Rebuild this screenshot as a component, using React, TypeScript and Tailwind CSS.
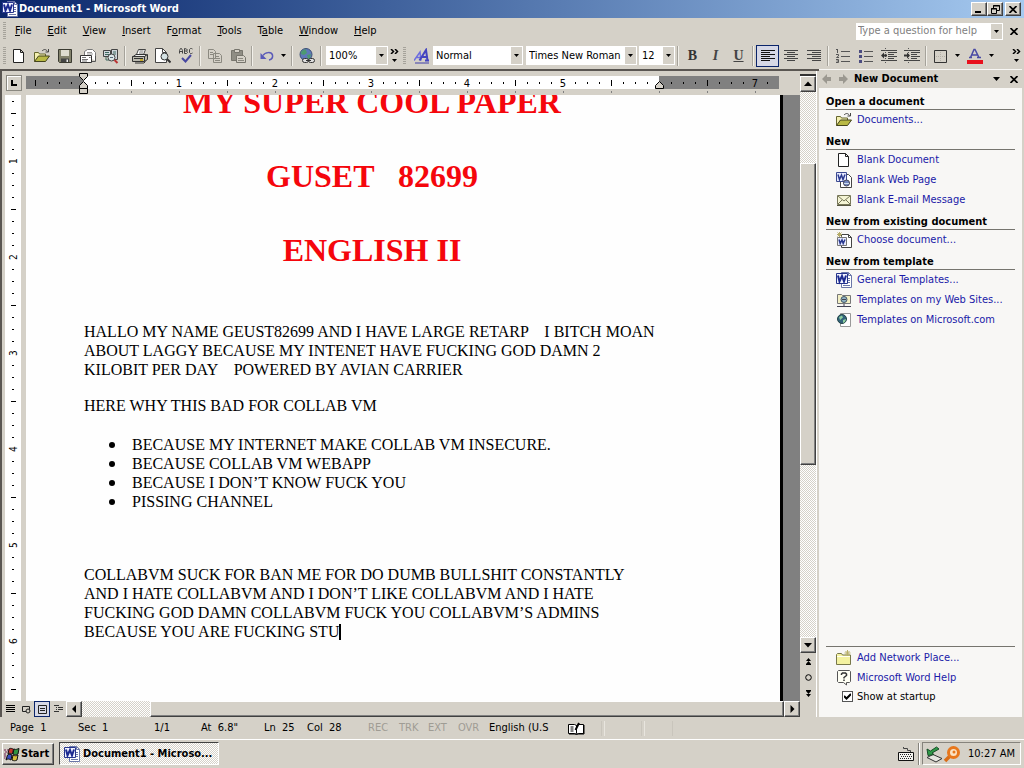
import React from "react";

const raised =
  "border border-t-white border-l-white border-r-[#404040] border-b-[#404040] shadow-[inset_-1px_-1px_0_#808080] bg-[#d5d1c8]";
const dither =
  "bg-[repeating-conic-gradient(#ffffff_0_25%,#d5d1c8_0_50%)] bg-[length:2px_2px]";

function Svg({ children, size = 16 }: { children: React.ReactNode; size?: number }) {
  return (
    <svg width={size} height={size} viewBox="0 0 16 16" fill="none" aria-hidden="true" className="shrink-0">
      {children}
    </svg>
  );
}

const PageShape = () => (
  <path d="M2.500 1.500h7l3 3v10h-10zM9.500 1.500v3h3" fill="#fff" stroke="#222" />
);

const WordIcon = () => (
  <Svg>
    <path d="M5.500 .5h7l3 3v12h-10z" fill="#fff" stroke="#6a76a8" />
    <path d="M12.500 .5v3h3M12 6.500h2M12 8.500h2M12 10.500h2M7 13.500h7" stroke="#6a76a8" />
    <path d="M.5 1.500h11v10H.5z" fill="#f2f4ff" stroke="#26358c" />
    <path d="M2 3.500l1.500 6L6 4l2 5.500L10 3.500" stroke="#1c2a90" strokeWidth="2" />
  </Svg>
);
const NewIcon = () => (
  <Svg>
    <PageShape />
  </Svg>
);
const OpenIcon = () => (
  <Svg>
    <path d="M.5 13.500v-9h4l1 1.500h6v2" fill="#f4f0b0" stroke="#66662f" />
    <path d="M.5 13.500l4-5.500h11l-4 5.500z" fill="#b9b944" stroke="#44441c" />
    <path d="M8 3c2-2 4-2 5.500.5M14.500 1v3h-3" stroke="#444" />
  </Svg>
);
const SaveIcon = () => (
  <Svg>
    <path d="M1.500 1.500h13v13h-12l-1-1z" fill="#83826c" stroke="#3a3a30" />
    <path d="M4 2h8v6H4z" fill="#dedccf" />
    <path d="M4 10.500h8V14H4z" fill="#444" />
    <path d="M9.500 11.500h1.500V14H9.500z" fill="#eee" />
  </Svg>
);
const MailIcon = () => (
  <Svg>
    <path d="M4.500 8V3.500l3-2h5l3 3v8" fill="#fff" stroke="#777" />
    <path d="M7 4.500h5M7 6h6" stroke="#999" />
    <path d="M.5 7.500h11v7H.5z" fill="#fff" stroke="#333" />
    <path d="M2 9.500h4M2 11.500h6M9 9.500h1.500M2 13h5" stroke="#777" />
    <path d="M12 13.500h3.500V8" stroke="#555" />
  </Svg>
);
const SearchIcon = () => (
  <Svg>
    <path d="M.5 2.500h7v6h-7zM8.500 1.500h6v10h-6z" fill="#cfd6dc" stroke="#444" />
    <path d="M2 4.500h4M2 6.500h4M10 4h3M10 6h3M3 9v3h3" stroke="#3f6a60" />
    <circle cx="8.500" cy="9.500" r="3.500" fill="#dce8ea" stroke="#444" />
    <path d="M11.500 12l3 3" stroke="#b33" strokeWidth="2" />
    <path d="M7 9.500h3" stroke="#567" />
  </Svg>
);
const PrintIcon = () => (
  <Svg>
    <path d="M4.500 6.500l2-5h7l-2 5" fill="#fff" stroke="#444" />
    <path d="M7.500 3h4M7 5h4" stroke="#777" />
    <path d="M.5 9l3.500-2.500h10.500L12.500 9z" fill="#eee" stroke="#333" />
    <path d="M.5 8.500h12v5H.5zM12.500 8.500l3-2v5l-3 2" fill="#bbb9ae" stroke="#333" />
    <path d="M2 10.500h9M3 15h9l1.500-1.500" stroke="#333" />
    <path d="M8 12h3" stroke="#c9a400" strokeWidth="1.500" />
  </Svg>
);
const PreviewIcon = () => (
  <Svg>
    <path d="M.5 .5h7l4 4v10H.5z" fill="#fff" stroke="#444" />
    <path d="M7.500 .5v4h4" stroke="#444" />
    <circle cx="9.500" cy="8.500" r="3.500" fill="#d5e2e4" stroke="#333" />
    <path d="M12 11l3.500 3.500" stroke="#333" strokeWidth="2" />
  </Svg>
);
const SpellIcon = () => (
  <Svg>
    <path d="M1.500 5.500V2.500l1-2h1l1 2v3M1.500 3.500h3M6.500 .5V5.500h2l1-1-1-1.500 1-1-1-1zM6.500 3h2M14.500 1l-1-.5h-1l-1 1v3l1 1h1l1-.5" stroke="#444" />
    <path d="M4 10l3.500 3.500L13 7" stroke="#4747a0" strokeWidth="2" />
  </Svg>
);
const CopyIcon = () => (
  <Svg>
    <path d="M1.500 1.500h5l2 2v7h-7zM6.500 5.500h6l2 2v7h-8z" fill="#d5d1c8" stroke="#8b8980" />
    <path d="M3 4.500h3M3 6.500h3M8 8.500h4M8 10.500h5M8 12.500h5" stroke="#8b8980" />
  </Svg>
);
const PasteIcon = () => (
  <Svg>
    <path d="M1.500 2.500h11v10h-11z" fill="#8f8d84" stroke="#77756d" />
    <path d="M4.500 1.500h5v3h-5z" fill="#d5d1c8" stroke="#77756d" />
    <path d="M6.500 7.500h7l2 2v5h-9z" fill="#d5d1c8" stroke="#77756d" />
    <path d="M8 10.500h5M8 12.500h6" stroke="#8b8980" />
  </Svg>
);
const UndoIcon = () => (
  <Svg>
    <path d="M4 7.500c2-3.500 8.500-4 9.500-.5.5 2.500-1 4.500-3.500 5" stroke="#5a5ab8" strokeWidth="1.500" />
    <path d="M1.500 5v6h6z" fill="#5a5ab8" />
  </Svg>
);
const HyperlinkIcon = () => (
  <Svg>
    <circle cx="7" cy="6.500" r="6" fill="#5f78b8" stroke="#3c5075" />
    <path d="M2.500 3l4-2 1.500 4-3 2-3-1zM8 7l4-1-1 4-2 1z" fill="#4c9a70" />
    <rect x="3.500" y="10.500" width="6" height="4" rx="2" fill="#ddd" stroke="#333" />
    <rect x="9.500" y="10.500" width="6" height="4" rx="2" fill="#ddd" stroke="#333" />
    <path d="M7 12.500h5" stroke="#333" />
  </Svg>
);
const StylesIcon = () => (
  <Svg>
    <path d="M0 12.500L6 4l1 8.500M2.500 9.500h4" stroke="#6d6de0" strokeWidth="1.500" />
    <path d="M5.500 12.500L12 2l1.500 10.500M8 9h5.500M11 12.500h4" stroke="#4444c0" strokeWidth="2" />
    <path d="M1 15h14" stroke="#3f3fa8" />
  </Svg>
);
const linesPath = {
  left: "M1 2.500h14M1 4.500h9M1 6.500h14M1 8.500h9M1 10.500h14M1 12.500h9",
  center: "M1 2.500h14M4 4.500h8M1 6.500h14M4 8.500h8M1 10.500h14M4 12.500h8",
  right: "M1 2.500h14M6 4.500h9M1 6.500h14M6 8.500h9M1 10.500h14M6 12.500h9",
};
const AlignIcon = ({ kind }: { kind: "left" | "center" | "right" }) => (
  <Svg>
    <path d={linesPath[kind]} stroke={kind === "left" ? "#111" : "#444"} />
  </Svg>
);
const NumberingIcon = () => (
  <Svg>
    <path d="M2.500 1v4M1 1.500h2M1 6.500h2.500v1.500L1.500 9.500H4M1 11.500h2.500v3H1M1.500 13h2" stroke="#555" />
    <path d="M6 3.500h9M6 8.500h9M6 13.500h9" stroke="#555" />
  </Svg>
);
const BulletsIcon = () => (
  <Svg>
    <path d="M1 2h3v3H1zM1 7h3v3H1zM1 12h3v3H1z" fill="#4c4c80" />
    <path d="M6 3.500h9M6 8.500h9M6 13.500h9" stroke="#555" />
  </Svg>
);
const IndentIcon = ({ flip = false }: { flip?: boolean }) => (
  <Svg>
    <path d="M0 2.500h16M7 4.500h9M7 6.500h6M7 8.500h9M7 10.500h6M0 12.500h16" stroke="#444" />
    <path d="M4.500 0v15" stroke="#555" strokeDasharray="1 1" />
    {flip ? <path d="M0 7.500l3-3v2h3v2H3v2z" fill="#333" /> : <path d="M6 7.500l-3-3v2H0v2h3v2z" fill="#333" />}
  </Svg>
);
const BorderIcon = () => (
  <Svg>
    <path d="M1.500 2.500h12v12h-12z" stroke="#333" />
    <path d="M7.500 4v10M3 8.500h10" stroke="#b5b1a8" strokeDasharray="1 1" />
  </Svg>
);
const FontColorIcon = () => (
  <Svg>
    <path d="M3.500 9.500L7 1.500h1l4 8M5 7h5.500M2 9.500h3M10 9.500h4" stroke="#4a4aa4" strokeWidth="1.500" />
    <path d="M0 12h16v4H0z" fill="#e8101c" />
  </Svg>
);
const WebPageIcon = () => (
  <Svg>
    <path d="M4.500 2.500h8l3 3v10h-11z" fill="#fff" stroke="#444" />
    <path d="M.5 .5h10v9H.5z" fill="#e8ebff" stroke="#3c4a90" />
    <path d="M2 2.500l1.500 5L5.500 3l1.500 4.500L9 2.500" stroke="#2b3a90" strokeWidth="1.500" />
    <circle cx="10.500" cy="11" r="3" fill="#7285c0" stroke="#445" />
    <path d="M8 11.500h5" stroke="#cde" />
  </Svg>
);
const EnvelopeIcon = () => (
  <Svg>
    <path d="M1.500 3.500h13v9h-13z" fill="#f4f4d4" stroke="#777758" />
    <path d="M2 4l6 5 6-5M2 12l4-4M14 12l-4-4" stroke="#777758" />
    <path d="M1 13.500h14" stroke="#555540" />
  </Svg>
);
const ExistingIcon = () => (
  <Svg>
    <path d="M5.500 2.500h7l3 3v10h-10z" fill="#fff" stroke="#444" />
    <path d="M12.500 2.500v3h3" stroke="#444" />
    <path d="M1.500 5.500h9v8h-9z" fill="#e8ebff" stroke="#777" />
    <path d="M3 7.500l1.200 4L6 8l1.200 3.500L9 7.500" stroke="#2b3a90" strokeWidth="1.500" />
    <path d="M3.500 0v5M1 2.500h5M1.500 .5l4 4M5.500 .5l-4 4" stroke="#b5ab68" />
  </Svg>
);
const SitesIcon = () => (
  <Svg>
    <path d="M1.500 11.500v-9h4l1 1h8v8z" fill="#f2efc4" stroke="#777" />
    <circle cx="8" cy="7.500" r="3" fill="#8fb2c4" stroke="#456" />
    <path d="M6 7.500h4M8 12v2M1 14.500h14" stroke="#445" />
  </Svg>
);
const GlobePageIcon = () => (
  <Svg>
    <path d="M4.500 1.500h10v13h-10z" fill="#fff" stroke="#999" />
    <circle cx="6" cy="7" r="4.500" fill="#33637c" stroke="#244" />
    <path d="M3 5l3-1.500 1 2L4 8zM7 8l3-1-1 3-2 1z" fill="#8fd0a0" />
  </Svg>
);
const NetPlaceIcon = () => (
  <Svg>
    <path d="M.5 14.500v-10l1-1h4l1 1.500h8v9.500z" fill="#f4f2a0" stroke="#77774a" />
    <path d="M1 6.500h13" stroke="#fffff0" />
    <path d="M11.500 0v6M8.500 3h6M9.500 1l4 4M13.500 1l-4 4" stroke="#b8b068" />
  </Svg>
);
const HelpIcon = () => (
  <Svg>
    <path d="M2.500 .5h11l1 1v10l-1 1h-3v2.500l-3-2.500h-5l-1-1v-10z" fill="#fffff4" stroke="#555" />
    <path d="M5.500 5V4l1-1h3l1 1v1.500L8 7.500V8.500M8 9.500v1.500" stroke="#333" strokeWidth="1.500" />
  </Svg>
);

function Down() {
  return (
    <svg width="5" height="3" viewBox="0 0 5 3" aria-hidden="true" className="shrink-0">
      <path d="M0 0h5L2.500 3z" fill="#000" />
    </svg>
  );
}

function Arrow({ dir }: { dir: "up" | "down" | "left" | "right" }) {
  const d = {
    up: "M4 1.500L8 6H0z",
    down: "M0 2h8L4 6.500z",
    left: "M2 4l4-4v8z",
    right: "M6.500 4l-4-4v8z",
  }[dir];
  return (
    <svg width="8" height="8" viewBox="0 0 8 8" aria-hidden="true">
      <path d={d} fill="#000" />
    </svg>
  );
}

const Tool = ({ label, children }: { label: string; children: React.ReactNode }) => (
  <button aria-label={label} title={label} className="flex h-[22px] w-[23px] shrink-0 items-center justify-center">
    {children}
  </button>
);
const Drop = ({ label }: { label: string }) => (
  <button aria-label={label} className="flex h-[22px] w-[11px] shrink-0 items-center justify-center">
    <Down />
  </button>
);
const Sep = () => <div className="mx-[2px] h-5 w-[2px] shrink-0 border-l border-[#a5a29a] border-r border-r-[#f2f0ea]" />;
const Grip = () => (
  <div className="h-[18px] w-[3px] shrink-0 bg-[repeating-linear-gradient(#a5a29a_0_1px,#d5d1c8_1px_2px)]" />
);

function Combo({ label, value, className }: { label: string; value: string; className: string }) {
  return (
    <div className={"flex h-[19px] shrink-0 items-center bg-white " + className}>
      <select aria-label={label} className="h-full min-w-0 flex-1 appearance-none bg-transparent pl-[3px] outline-none">
        <option>{value}</option>
      </select>
      <span className="pointer-events-none mr-px flex h-[17px] w-[11px] items-center justify-center bg-[#d5d1c8]">
        <Down />
      </span>
    </div>
  );
}

function Chevrons() {
  return (
    <button aria-label="Toolbar options" className="flex h-[22px] w-[11px] shrink-0 flex-col items-center justify-center gap-[5px]">
      <svg width="9" height="5" viewBox="0 0 9 5" aria-hidden="true">
        <path d="M1 0l2.500 2.500L1 5M5 0l2.500 2.500L5 5" fill="none" stroke="#000" strokeWidth="1.500" />
      </svg>
      <Down />
    </button>
  );
}

function CloseGlyph() {
  return (
    <svg width="8" height="7" viewBox="0 0 8 7" aria-hidden="true">
      <path d="M.5 0l7 7M7.500 0l-7 7" stroke="#000" strokeWidth="1.700" />
    </svg>
  );
}

const menus = ["File", "Edit", "View", "Insert", "Format", "Tools", "Table", "Window", "Help"];
const menuAccess: Record<string, number> = { Format: 1, Table: 1 };

function TitleBar() {
  return (
    <header className="flex h-[18px] shrink-0 items-center bg-linear-to-r from-[#0a246a] to-[#a6caf0] pr-[3px] pl-[2px] text-white">
      <WordIcon />
      <h1 className="ml-px flex-1 text-[11px] font-bold">Document1 - Microsoft Word</h1>
      <button aria-label="Minimize" className={"flex h-[14px] w-4 items-end justify-center pb-[2px] " + raised}>
        <span className="mr-[2px] h-[2px] w-[6px] bg-black" />
      </button>
      <button aria-label="Restore" className={"flex h-[14px] w-4 items-center justify-center " + raised}>
        <svg width="9" height="9" viewBox="0 0 9 9" fill="none" stroke="#000" aria-hidden="true">
          <path d="M2.500 3V.5h6v5H6M2 1h7M.5 3.500h5v5h-5zM0 4h6" />
        </svg>
      </button>
      <button aria-label="Close" className={"ml-[2px] flex h-[14px] w-4 items-center justify-center " + raised}>
        <CloseGlyph />
      </button>
    </header>
  );
}

function MenuBar() {
  return (
    <nav className="mt-[2px] flex h-[22px] shrink-0 items-center pr-1 pl-[3px]">
      <Grip />
      <div className="ml-px flex flex-1">
        {menus.map((m) => {
          const i = menuAccess[m] ?? 0;
          return (
            <button key={m} className="px-2 leading-4">
              {m.slice(0, i)}
              <u>{m[i]}</u>
              {m.slice(i + 1)}
            </button>
          );
        })}
      </div>
      <div className="flex h-[17px] w-[147px] items-center bg-white">
        <input
          aria-label="Type a question for help"
          placeholder="Type a question for help"
          className="min-w-0 flex-1 bg-transparent pl-[2px] outline-none placeholder:text-[#808080]"
        />
        <span className="mr-px flex h-[15px] w-[11px] items-center justify-center bg-[#d5d1c8]">
          <Down />
        </span>
      </div>
      <button aria-label="Close document" className="ml-1 flex h-4 w-[13px] items-center justify-center">
        <CloseGlyph />
      </button>
    </nav>
  );
}

function Toolbar() {
  return (
    <div role="toolbar" className="flex h-[27px] shrink-0 items-center pr-[2px] pl-[3px]">
      <Grip />
      <span className="w-px" />
      <Tool label="New"><NewIcon /></Tool>
      <Tool label="Open"><OpenIcon /></Tool>
      <Tool label="Save"><SaveIcon /></Tool>
      <Tool label="E-mail"><MailIcon /></Tool>
      <Tool label="Search"><SearchIcon /></Tool>
      <Sep />
      <Tool label="Print"><PrintIcon /></Tool>
      <Tool label="Print Preview"><PreviewIcon /></Tool>
      <Tool label="Spelling"><SpellIcon /></Tool>
      <Sep />
      <Tool label="Copy"><CopyIcon /></Tool>
      <Tool label="Paste"><PasteIcon /></Tool>
      <Sep />
      <Tool label="Undo"><UndoIcon /></Tool>
      <Drop label="Undo history" />
      <Sep />
      <Tool label="Insert Hyperlink"><HyperlinkIcon /></Tool>
      <Sep />
      <Combo label="Zoom" value="100%" className="ml-[2px] w-[62px]" />
      <span className="w-px" />
      <Chevrons />
      <span className="w-[3px]" />
      <Grip />
      <span className="w-[4px]" />
      <Tool label="Styles and Formatting"><StylesIcon /></Tool>
      <Combo label="Style" value="Normal" className="w-[90px]" />
      <Combo label="Font" value="Times New Roman" className="ml-[3px] w-[111px]" />
      <Combo label="Font Size" value="12" className="ml-[2px] w-[36px]" />
      <Sep />
      <Tool label="Bold"><b className="font-['Liberation_Serif',serif] text-[14px] text-[#333]">B</b></Tool>
      <Tool label="Italic"><i className="font-['Liberation_Serif',serif] text-[14px] font-bold text-[#444]">I</i></Tool>
      <Tool label="Underline"><u className="font-['Liberation_Serif',serif] text-[14px] font-bold text-[#444]">U</u></Tool>
      <Sep />
      <button aria-label="Align Left" aria-pressed="true" className="flex h-[22px] w-[23px] shrink-0 items-center justify-center border border-[#0a246a] bg-[#d6d8e6]">
        <AlignIcon kind="left" />
      </button>
      <Tool label="Center"><AlignIcon kind="center" /></Tool>
      <Tool label="Align Right"><AlignIcon kind="right" /></Tool>
      <Sep />
      <Tool label="Numbering"><NumberingIcon /></Tool>
      <Tool label="Bullets"><BulletsIcon /></Tool>
      <Tool label="Decrease Indent"><IndentIcon flip /></Tool>
      <Tool label="Increase Indent"><IndentIcon /></Tool>
      <Sep />
      <Tool label="Outside Border"><BorderIcon /></Tool>
      <Drop label="Border options" />
      <Tool label="Font Color"><FontColorIcon /></Tool>
      <Drop label="Font color options" />
      <span className="flex-1" />
      <Chevrons />
    </div>
  );
}

const eighths = Array.from({ length: 64 }, (_, i) => i - 4);

function HorizontalRuler() {
  return (
    <svg width="754" height="24" viewBox="26 71 754 24" className="shrink-0" role="img" aria-label="Horizontal ruler">
      <rect x="26" y="76" width="753" height="13" fill="#808080" />
      <rect x="83" y="76" width="576" height="13" fill="#fff" />
      {eighths.map((n) => {
        const x = 83 + n * 12;
        if (n === 0 || n === 48 || x > 775) return null;
        if (n % 8 === 0)
          return (
            <text key={n} x={x} y="87" textAnchor="middle" fontSize="11" fill="#000">
              {n / 8}
            </text>
          );
        return n % 4 === 0 ? (
          <rect key={n} x={x} y="80" width="1" height="6" fill="#000" />
        ) : (
          <rect key={n} x={x} y="82" width="1" height="2" fill="#000" />
        );
      })}
      {Array.from({ length: 14 }, (_, i) => (
        <rect key={i} x={131 + i * 48} y="91" width="1" height="2" fill="#808080" />
      ))}
      <path d="M79.500 73.500h8v3l-4 4-4-4zM79.500 88.500h8v-3l-4-4-4 4zM79.500 88.500h8v5h-8z" fill="#d5d1c8" stroke="#000" />
      <path d="M655.500 88.500h8v-3l-4-4-4 4z" fill="#d5d1c8" stroke="#000" />
    </svg>
  );
}

function VerticalRuler() {
  return (
    <div className="w-[24px] shrink-0 overflow-hidden border-r-[5px] border-l-[3px] border-[#d5d1c8] bg-white">
      <svg width="16" height="606" viewBox="5 94 16 606" role="img" aria-label="Vertical ruler">
        {Array.from({ length: 51 }, (_, i) => {
          const n = i + 3;
          const y = 64 + n * 12;
          if (n % 8 === 0)
            return (
              <text key={n} x="13" y={y} transform={`rotate(-90 13 ${y})`} dy="4" textAnchor="middle" fontSize="10">
                {n / 8}
              </text>
            );
          return n % 4 === 0 ? (
            <rect key={n} x="11" y={y} width="5" height="1" />
          ) : (
            <rect key={n} x="12" y={y} width="2" height="1" />
          );
        })}
      </svg>
    </div>
  );
}

const reasons = [
  "BECAUSE MY INTERNET MAKE COLLAB VM INSECURE.",
  "BECAUSE COLLAB VM WEBAPP",
  "BECAUSE I DON’T KNOW FUCK YOU",
  "PISSING CHANNEL",
];

function DocumentPage() {
  return (
    <article className="min-w-0 flex-1 overflow-hidden border-r-[3px] border-black bg-[#fefefe] pr-[120px] pl-[58px] font-['Liberation_Serif',serif] text-[16px] leading-[19px] whitespace-pre">
      <div className="-mt-[5px] flex flex-col gap-[50px] text-center text-[32px] leading-[24px] font-bold text-[#f5060c]">
        <h2>MY SUPER COOL PAPER</h2>
        <h2>{"GUSET   82699"}</h2>
        <h2>ENGLISH II</h2>
      </div>
      <p className="mt-[60px]">
        {"HALLO MY NAME GEUST82699 AND I HAVE LARGE RETARP    I BITCH MOAN\nABOUT LAGGY BECAUSE MY INTENET HAVE FUCKING GOD DAMN 2\nKILOBIT PER DAY    POWERED BY AVIAN CARRIER"}
      </p>
      <p className="mt-[17px]">HERE WHY THIS BAD FOR COLLAB VM</p>
      <ul className="mt-5">
        {reasons.map((reason) => (
          <li key={reason} className="flex items-center">
            <span className="mr-[17px] ml-[25px] h-[6px] w-[6px] rounded-full bg-black" />
            {reason}
          </li>
        ))}
      </ul>
      <p className="mt-[54px]">
        {"COLLABVM SUCK FOR BAN ME FOR DO DUMB BULLSHIT CONSTANTLY\nAND I HATE COLLABVM AND I DON’T LIKE COLLABVM AND I HATE\nFUCKING GOD DAMN COLLABVM FUCK YOU COLLABVM’S ADMINS\nBECAUSE YOU ARE FUCKING STU"}
        <span className="inline-block h-4 w-[2px] bg-black align-text-bottom" />
      </p>
    </article>
  );
}

function ViewButtons() {
  return (
    <div className="flex h-4 shrink-0">
      <button aria-label="Normal View" className="flex w-4 items-center justify-center">
        <svg width="9" height="8" viewBox="0 0 9 8" stroke="#000"><path d="M0 .5h9M0 2.500h9M0 4.500h9M0 6.500h9" /></svg>
      </button>
      <button aria-label="Web Layout View" className="flex w-4 items-center justify-center">
        <svg width="9" height="9" viewBox="0 0 9 9" fill="none" stroke="#222"><path d="M.5 1.500h7v5h-7z" /><circle cx="6" cy="6" r="2" fill="#d5d1c8" /></svg>
      </button>
      <button aria-label="Print Layout View" aria-pressed="true" className="flex w-4 items-center justify-center border border-[#0a246a] bg-[#d6d8e6]">
        <svg width="9" height="9" viewBox="0 0 9 9" fill="none" stroke="#222"><path d="M.5 .5h8v8h-8zM2 3.500h5M2 5.500h5" /></svg>
      </button>
      <button aria-label="Outline View" className="flex w-4 items-center justify-center">
        <svg width="9" height="8" viewBox="0 0 9 8" stroke="#333"><path d="M0 .5h5M2 2.500h1M4 2.500h5M2 4.500h1M4 4.500h5M0 6.500h5" /></svg>
      </button>
    </div>
  );
}

function BrowseButtons() {
  return (
    <div className="flex h-16 shrink-0 flex-col items-center">
      <button aria-label="Previous Page" className="flex h-4 w-4 items-center justify-center">
        <svg width="5" height="7" viewBox="0 0 5 7"><path d="M2.500 0L5 3H0zM2.500 3L5 6H0zM0 6h5v1H0z" /></svg>
      </button>
      <button aria-label="Select Browse Object" className="flex h-4 w-4 items-center justify-center">
        <svg width="7" height="7" viewBox="0 0 7 7" fill="#d5d1c8" stroke="#000"><circle cx="3.500" cy="3.500" r="2.800" /></svg>
      </button>
      <button aria-label="Next Page" className="flex h-4 w-4 items-center justify-center">
        <svg width="5" height="7" viewBox="0 0 5 7"><path d="M2.500 7L5 4H0zM2.500 4L5 1H0zM0 0h5v1H0z" /></svg>
      </button>
    </div>
  );
}

function Editor() {
  return (
    <main className="flex min-w-0 flex-1 border-t-2 border-l-2 border-[#5a5652]">
      <div className="flex min-w-0 flex-1 flex-col">
        <div className="flex h-6 shrink-0 overflow-hidden">
          <button aria-label="Tab type" className="mt-[4px] mr-[4px] ml-[4px] flex h-4 w-4 shrink-0 items-center justify-center border border-[#8a8880] shadow-[inset_1px_1px_0_#fff]">
            <svg width="6" height="6" viewBox="0 0 6 6"><path d="M1 0v5h5" fill="none" stroke="#000" strokeWidth="2" /></svg>
          </button>
          <HorizontalRuler />
        </div>
        <div className="flex min-h-0 flex-1">
          <VerticalRuler />
          <DocumentPage />
          <div className="w-[17px] shrink-0 bg-[#808080]" />
        </div>
        <div className="flex h-4 shrink-0">
          <ViewButtons />
          <button aria-label="Scroll left" className={"flex w-4 items-center justify-center " + raised}><Arrow dir="left" /></button>
          <div className={"flex flex-1 pl-[68px] " + dither}>
            <div className={"flex-1 " + raised} />
          </div>
          <button aria-label="Scroll right" className={"flex w-4 items-center justify-center " + raised}><Arrow dir="right" /></button>
        </div>
      </div>
      <div className="flex w-4 shrink-0 flex-col">
        <div className="h-[5px] shrink-0 border-b-2 border-[#333]" />
        <button aria-label="Scroll up" className={"flex h-4 shrink-0 items-center justify-center " + raised}><Arrow dir="up" /></button>
        <div className={"flex min-h-0 flex-1 flex-col " + dither}>
          <div className="flex-[71]" />
          <div className={"flex-[302] " + raised} />
          <div className="flex-[173]" />
        </div>
        <button aria-label="Scroll down" className={"flex h-4 shrink-0 items-center justify-center " + raised}><Arrow dir="down" /></button>
        <BrowseButtons />
      </div>
      <div className="w-[3px] shrink-0 border-l border-white" />
    </main>
  );
}

const sections = [
  { title: "Open a document", items: [["Documents...", <OpenIcon />]] },
  {
    title: "New",
    items: [
      ["Blank Document", <NewIcon />],
      ["Blank Web Page", <WebPageIcon />],
      ["Blank E-mail Message", <EnvelopeIcon />],
    ],
  },
  { title: "New from existing document", items: [["Choose document...", <ExistingIcon />]] },
  {
    title: "New from template",
    items: [
      ["General Templates...", <WordIcon />],
      ["Templates on my Web Sites...", <SitesIcon />],
      ["Templates on Microsoft.com", <GlobePageIcon />],
    ],
  },
] as { title: string; items: [string, React.ReactNode][] }[];

function PaneLink({ text, icon }: { text: string; icon: React.ReactNode }) {
  return (
    <a href="#" className="flex h-5 items-center gap-[5px] pl-[10px] text-[#1a1aa8]">
      {icon}
      {text}
    </a>
  );
}

function TaskPane() {
  return (
    <aside className="mr-[2px] flex w-[203px] shrink-0 flex-col bg-[#f8f7f5] pt-px">
      <div className="flex h-[18px] shrink-0 items-center bg-[#d5d1c8] pr-1 pl-[3px]">
        <svg width="28" height="10" viewBox="0 0 28 10" fill="#9b9890" aria-hidden="true">
          <path d="M0 5l5-5v3h4v4H5v3zM26 5l-5-5v3h-4v4h4v3z" />
        </svg>
        <h2 className="ml-1 flex-1 font-bold">New Document</h2>
        <button aria-label="Other task panes" className="mr-[10px]">
          <svg width="7" height="4" viewBox="0 0 7 4"><path d="M0 0h7L3.500 4z" /></svg>
        </button>
        <button aria-label="Close pane"><CloseGlyph /></button>
      </div>
      <div className="flex-1 pt-[2px] pr-[7px] pl-[7px]">
        {sections.map((s) => (
          <section key={s.title}>
            <h3 className="flex h-5 items-center border-b border-[#76746e] pt-[5px] font-bold">{s.title}</h3>
            {s.items.map(([text, icon]) => (
              <PaneLink key={text} text={text} icon={icon} />
            ))}
          </section>
        ))}
      </div>
      <div className="mr-[7px] ml-[7px] border-t border-[#76746e] pt-px pb-3">
        <PaneLink text="Add Network Place..." icon={<NetPlaceIcon />} />
        <PaneLink text="Microsoft Word Help" icon={<HelpIcon />} />
        <label className="flex h-[17px] items-center gap-1 pl-4">
          <input type="checkbox" defaultChecked className="peer sr-only" />
          <span className="flex h-[11px] w-[11px] items-center justify-center border border-[#555] bg-white">
            <svg width="7" height="7" viewBox="0 0 7 7" fill="none" stroke="#000" strokeWidth="2"><path d="M0 3l2.500 2.500L7 1" /></svg>
          </span>
          Show at startup
        </label>
      </div>
    </aside>
  );
}

function StatusBar() {
  return (
    <div className="flex h-[23px] shrink-0 items-center border-b border-white pl-[10px] whitespace-pre">
      <span className="w-[68px]">{"Page  1"}</span>
      <span className="w-[76px]">{"Sec  1"}</span>
      <span className="w-[47px]">1/1</span>
      <span className="w-[63px]">{'At  6.8"'}</span>
      <span className="w-[43px]">{"Ln  25"}</span>
      <span className="w-[61px]">{"Col  28"}</span>
      <span className="w-[31px] text-[#9f9c94]">REC</span>
      <span className="w-[29px] text-[#9f9c94]">TRK</span>
      <span className="w-[30px] text-[#9f9c94]">EXT</span>
      <span className="w-[31px] text-[#9f9c94]">OVR</span>
      <span className="w-[79px]">English (U.S</span>
      <svg width="17" height="13" viewBox="0 0 17 13" aria-hidden="true">
        <path d="M.5 2.500h6l2 1 2-1h5v9h-5l-2 1-2-1h-6zM8.500 3.500v8" fill="#fff" stroke="#000" />
        <path d="M1 12h15v-9M2.500 5h3M2.500 7h3M2.500 9h3" fill="none" stroke="#000" />
        <path d="M11 1L7.500 8" stroke="#000" strokeWidth="2" />
      </svg>
      <span className="ml-4 h-[15px] w-1 border-r border-l border-[#c9c5bc] border-r-[#e8e5de]" />
      <span className="ml-9 h-[15px] w-1 border-r border-l border-[#c9c5bc] border-r-[#e8e5de]" />
      <span className="ml-6 h-[15px] w-1 border-r border-[#c9c5bc]" />
    </div>
  );
}

function TaskBar() {
  return (
    <footer className="flex h-[28px] shrink-0 items-center pr-[3px] pb-px pl-[2px]">
      <button className={"flex h-[22px] w-[52px] items-center gap-px pl-px font-bold " + raised}>
        <Svg>
          <path d="M5 3c2-1.500 3 0 4.500 0L8.500 8C7 8 6 6.500 4 8z" fill="#c8362c" stroke="#111" />
          <path d="M10 3c2 1 3 0 5-.5L14 8c-2 1-3 1-5 0z" fill="#2f9440" stroke="#111" />
          <path d="M3.500 9c2-1.500 3-.5 4.500 0l-1 5c-2-1-3-1.500-5 0z" fill="#3a4fc0" stroke="#111" />
          <path d="M9 9c2 1 3 1 5 0l-1 5c-2 1-3 1-5 0z" fill="#d8bf3a" stroke="#111" />
          <path d="M0 4h2M1 6h2.500M0 8h2M0 10h2M0 12h1.500M3 4h1.500" stroke="#702050" />
        </Svg>
        Start
      </button>
      <button className={"ml-[5px] flex h-[23px] w-[160px] items-center gap-[3px] border border-t-[#404040] border-r-white border-b-white border-l-[#404040] pl-1 font-bold " + dither}>
        <WordIcon />
        Document1 - Microso...
      </button>
      <span className="flex-1" />
      <svg width="16" height="14" viewBox="0 0 16 14" fill="none" aria-label="Keyboard">
        <path d="M.5 5.500h15v8H.5z" fill="#f4f4f0" stroke="#111" />
        <path d="M2 7.500h12M3 9.500h11M2 11.500h12" stroke="#222" strokeDasharray="1 1" />
        <path d="M12.500 5V3.500h-3v-2h-4V0" stroke="#444" />
      </svg>
      <span className="ml-1 h-[22px] w-[2px] border-l border-[#86837c] border-r border-r-white" />
      <div className="ml-[2px] flex h-[23px] w-[99px] items-center border border-t-[#86837c] border-r-white border-b-white border-l-[#86837c] pl-[2px]">
        <svg width="18" height="18" viewBox="0 0 18 18" aria-hidden="true">
          <path d="M2 12.500l6-3 9 4-6 3.500z" fill="#e6e6e0" stroke="#333" />
          <path d="M2 4l1 6.500 6-1-2-1.500 7-4-2.500-2L5.500 6z" fill="#2f9a48" stroke="#174d26" />
        </svg>
        <svg width="18" height="18" viewBox="0 0 18 18" fill="none" aria-hidden="true">
          <path d="M7 11L2 16" stroke="#d96d18" strokeWidth="3.500" />
          <circle cx="10.500" cy="7.500" r="5" fill="#fbe3c4" stroke="#e8771c" strokeWidth="3" />
          <circle cx="11" cy="7" r="1.500" fill="#e8771c" />
        </svg>
        <span className="flex-1 pr-[5px] text-right">10:27 AM</span>
      </div>
    </footer>
  );
}

export default function App() {
  return (
    <div className="flex h-screen flex-col overflow-hidden bg-[#d5d1c8] font-['DejaVu_Sans_Condensed','DejaVu_Sans',sans-serif] text-[11px] leading-[14px] text-black">
      <TitleBar />
      <MenuBar />
      <Toolbar />
      <div className="flex min-h-0 flex-1">
        <Editor />
        <TaskPane />
      </div>
      <StatusBar />
      <TaskBar />
    </div>
  );
}
